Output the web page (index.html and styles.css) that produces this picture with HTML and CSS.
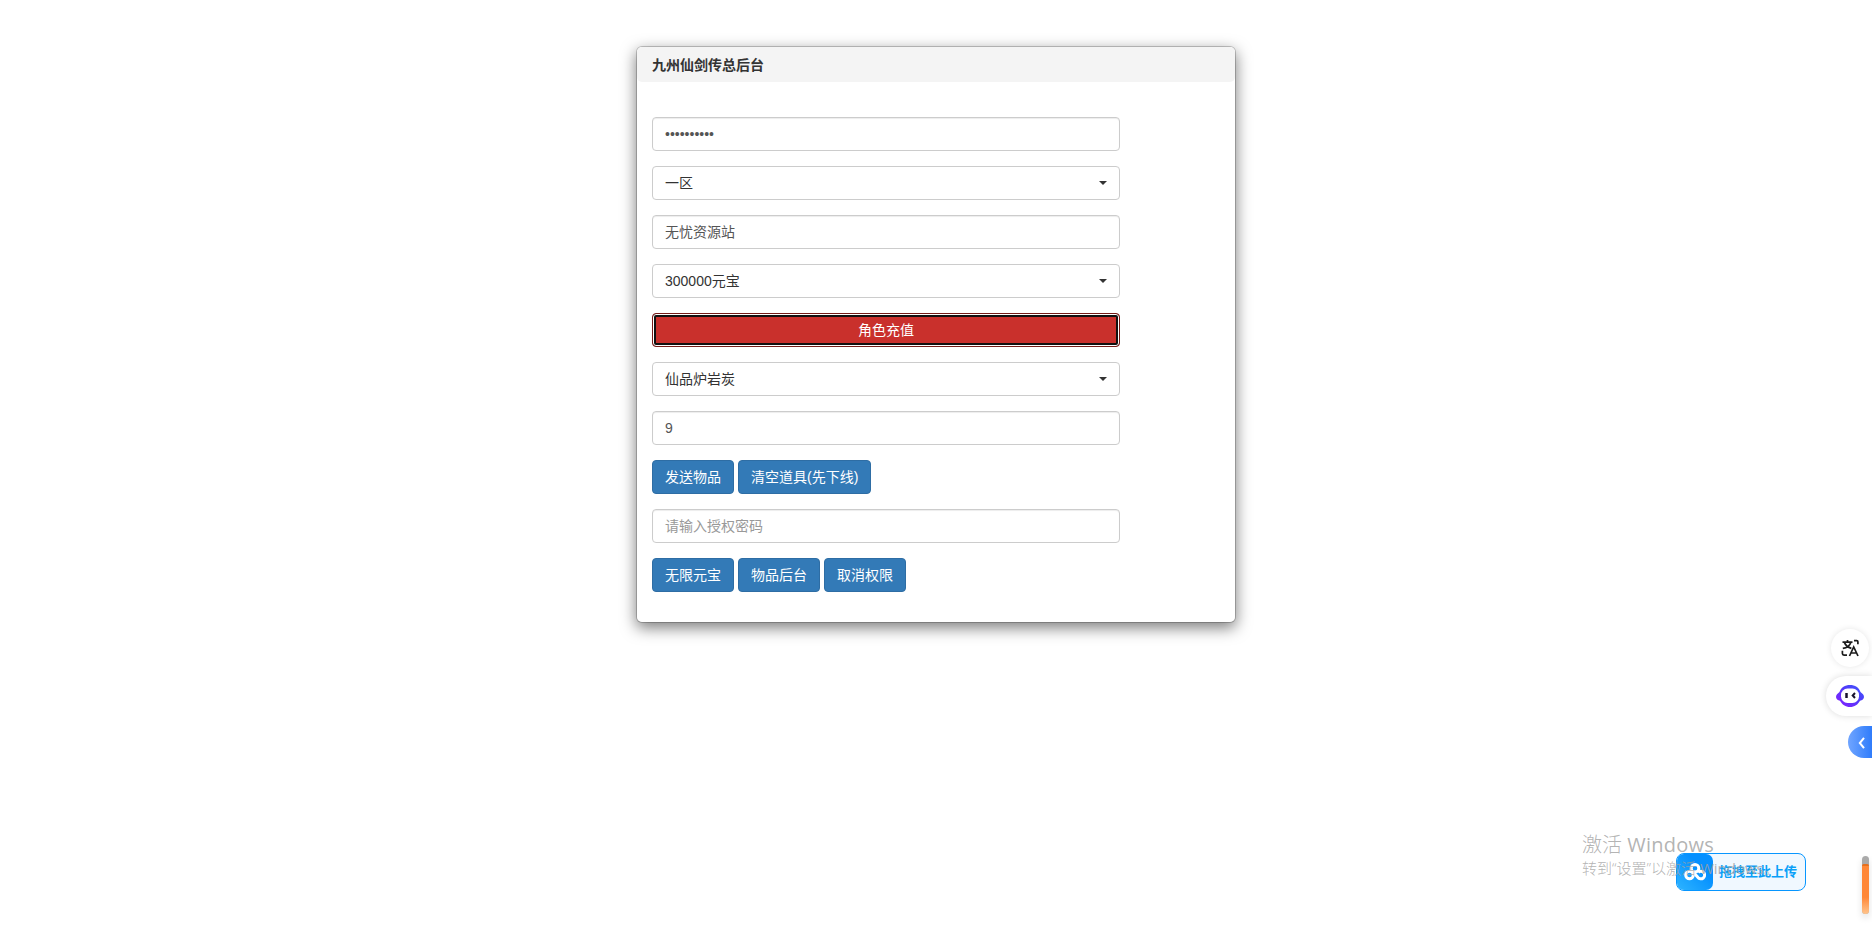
FILE: index.html
```html
<!DOCTYPE html>
<html lang="zh-CN">
<head>
<meta charset="utf-8">
<title>九州仙剑传总后台</title>
<link rel="stylesheet" href="styles.css">
</head>
<body>
<main class="panel">
  <header class="panel-header">九州仙剑传总后台</header>
  <form class="panel-body">
    <div class="field">••••••••••</div>
    <div class="field select"><span>一区</span><i class="caret"></i></div>
    <div class="field"><span>无忧资源站</span></div>
    <div class="field select"><span>300000元宝</span><i class="caret"></i></div>
    <button type="button" class="btn btn-danger">角色充值</button>
    <div class="field select"><span>仙品炉岩炭</span><i class="caret"></i></div>
    <div class="field">9</div>
    <div class="actions">
      <button type="button" class="btn">发送物品</button>
      <button type="button" class="btn">清空道具(先下线)</button>
    </div>
    <div class="field placeholder"><span>请输入授权密码</span></div>
    <div class="actions">
      <button type="button" class="btn">无限元宝</button>
      <button type="button" class="btn">物品后台</button>
      <button type="button" class="btn">取消权限</button>
    </div>
  </form>
</main>

<aside class="side-tools">
  <div class="tool translate">
    <svg width="18" height="18" viewBox="0 0 18 18" fill="none" stroke="#1c1c1c" stroke-width="1.7">
      <path d="M1.500 3.200h10M6.500 1v2.200M3.400 3.400c1 2.800 3.500 5 7 6M9.800 3.400C8.800 6.500 6 8.600 1.800 9.400"/>
      <path d="M8.500 17 12.700 8l4.300 9M10 14h5.400"/>
      <path d="M13 1.600h2.700q1.200 0 1.200 1.200v2.400M1.400 11.800v2.700q0 1.600 1.600 1.600h3"/>
    </svg>
  </div>
  <div class="tool assistant">
    <svg width="28" height="22" viewBox="0 0 28 22">
      <defs><linearGradient id="bot" x1="0" y1="1" x2="1" y2="0"><stop offset="0" stop-color="#8b1dff"/><stop offset=".55" stop-color="#5238fa"/><stop offset="1" stop-color="#3f5dfb"/></linearGradient></defs>
      <path fill="url(#bot)" d="M14 0c5 0 9 2.500 10.500 7 2 1.500 3.500 3 3.500 5s-1.700 3.200-4 3.700C22 19.500 18.500 22 14 22S6 19.500 4 15.700C1.700 15.200 0 14 0 12s1.500-3.500 3.500-5C5 2.500 9 0 14 0z"/>
      <rect x="5" y="3.500" width="18" height="14.500" rx="6.500" fill="#fff"/>
      <path d="M10.500 8v5" stroke="#17122b" stroke-width="2.500"/>
      <path d="m19 8-2.300 2.500L19 13" fill="none" stroke="#17122b" stroke-width="2"/>
    </svg>
  </div>
  <div class="tool drawer">
    <svg width="8" height="12" viewBox="0 0 8 12" fill="none" stroke="#fff" stroke-width="2"><path d="M6 .8 1.800 6 6 11.200"/></svg>
  </div>
</aside>

<div class="upload">
  <div class="upload-icon">
    <svg width="22" height="18" viewBox="0 0 22 18" fill="none" stroke="#fff" stroke-width="3">
      <circle cx="11" cy="5.300" r="3.800"/>
      <circle cx="5.500" cy="12" r="3.800"/>
      <path d="M9.500 9.500 13.800 14.300a3.800 3.800 0 1 0 .4-5"/>
    </svg>
  </div>
  <span class="upload-text">拖拽至此上传</span>
</div>
<div class="activation">
  <div class="activation-title">激活 <span class="latin">Windows</span></div>
  <div class="activation-note">转到“设置”以激活 <span class="latin">Windows</span>。</div>
</div>
<div class="meter"><div class="meter-fill"></div></div>
</body>
</html>
```
FILE: styles.css
```css
* { box-sizing: border-box; }
html, body { height: 100%; overflow: hidden; }
body {
  margin: 0;
  padding-top: 46px;
  background: #fff;
  color: #333;
  font: 14px/20px "Liberation Sans", "Noto Sans CJK SC", sans-serif;
}
.panel {
  width: 600px;
  height: 577px;
  margin: 0 auto;
  border: 1px solid rgba(0, 0, 0, .2);
  border-radius: 6px;
  background: #fff;
  background-clip: padding-box;
  box-shadow: 0 5px 15px rgba(0, 0, 0, .5);
}
.panel-header {
  height: 35px;
  padding: 8px 15px;
  border-radius: 5px;
  background: #f4f4f4;
  font-weight: 700;
}
.panel-body {
  display: flex;
  flex-direction: column;
  gap: 15px;
  width: 498px;
  padding: 35px 15px 30px;
}
.field {
  display: flex;
  align-items: center;
  height: 34px;
  padding: 0 12px;
  border: 1px solid #ccc;
  border-radius: 4px;
  background: #fff;
  color: #555;
  box-shadow: inset 0 1px 1px rgba(0, 0, 0, .075);
}
.select { justify-content: space-between; color: #333; box-shadow: none; }
.placeholder { color: #999; }
.caret {
  border-top: 4px solid #333;
  border-left: 4px solid transparent;
  border-right: 4px solid transparent;
}
.actions { display: flex; gap: 4px; }
.btn {
  height: 34px;
  padding: 0 12px;
  border: 1px solid #2e6da4;
  border-radius: 4px;
  background: #337ab7;
  color: #fff;
  font: inherit;
  white-space: nowrap;
}
.btn-danger {
  border-color: #761c19;
  background: #c9302c;
  box-shadow: inset 0 0 0 1px #fff, inset 0 0 0 3px #101010;
}
.side-tools {
  position: absolute;
  top: 629px;
  right: 0;
  display: flex;
  flex-direction: column;
  align-items: flex-end;
}
.tool { display: flex; align-items: center; background: #fff; }
.translate {
  justify-content: center;
  width: 38px;
  height: 38px;
  margin: 0 3px 9px 0;
  border-radius: 50%;
  box-shadow: 0 0 6px rgba(0, 0, 0, .1);
}
.assistant {
  width: 46px;
  height: 40px;
  margin-bottom: 10px;
  padding-left: 10px;
  border-radius: 20px 0 0 20px;
  box-shadow: 0 0 7px rgba(0, 0, 0, .14);
}
.drawer {
  width: 24px;
  height: 32px;
  padding: 2px 0 0 10px;
  border-radius: 16px 0 0 16px;
  background: linear-gradient(90deg, #70a5ff, #2f7cfb);
}
.upload {
  position: absolute;
  left: 1676px;
  top: 853px;
  display: flex;
  align-items: center;
  width: 130px;
  height: 38px;
  border: 1px solid #0796ff;
  border-radius: 8px;
  background: #f0f8ff;
  overflow: hidden;
}
.upload-icon {
  display: flex;
  align-items: center;
  justify-content: center;
  width: 36px;
  height: 36px;
  border-radius: 0 7px 7px 0;
  background: linear-gradient(45deg, #2db4ff, #0590ff 65%);
}
.upload-text { margin-left: 6px; color: #0aa0f8; font-size: 13px; font-weight: 700; white-space: nowrap; }
.activation {
  position: absolute;
  left: 1582px;
  top: 831px;
  color: rgba(160, 160, 160, .8);
  font-family: "Open Sans", "Noto Sans CJK SC", sans-serif;
  font-weight: 300;
  white-space: nowrap;
}
.latin { font-weight: 400; }
.activation-title { font-size: 20px; line-height: 27px; }
.activation-title .latin { letter-spacing: .25px; }
.activation-note { font-size: 15px; line-height: 20px; }
.meter {
  position: absolute;
  left: 1862px;
  top: 856px;
  width: 7px;
  height: 58px;
  padding-top: 8px;
  border-radius: 4px;
  background: #aaa;
  box-shadow: 0 4px 7px rgba(0, 0, 0, .12);
}
.meter-fill {
  height: 50px;
  border-top: 2px solid #e8701c;
  border-radius: 2px 2px 4px 4px;
  background: linear-gradient(#ff8838 65%, #ffc48c);
}
```
